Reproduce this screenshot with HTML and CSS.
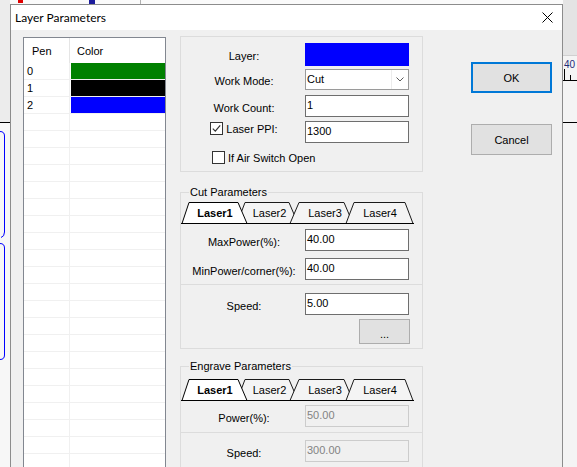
FILE: index.html
```html
<!DOCTYPE html>
<html>
<head>
<meta charset="utf-8">
<title>Layer Parameters</title>
<link rel="stylesheet" href="styles.css">
</head>
<body>
<div class="screen">
  <div class="app-left">
    <svg width="10" height="467" viewBox="0 0 10 467">
      <rect width="10" height="467" fill="#f7f7f7"/>
      <rect width="10" height="122" fill="#ececec"/>
      <line x1="0" y1="122.5" x2="10" y2="122.5" stroke="#000"/>
      <path d="M0,131.5 Q4.5,131.5 4.5,136 V232 Q4.5,236.5 1,237.5" fill="none" stroke="#0000ff"/>
      <path d="M0,243.5 Q4.5,243.5 4.5,248 V355 Q4.5,359.5 0,359.5" fill="none" stroke="#0000ff"/>
    </svg>
  </div>
  <div class="center-col">
    <div class="app-top">
      <svg width="553" height="4" viewBox="0 0 553 4">
        <rect x="8" y="0" width="5" height="3" fill="#e00000"/>
        <rect x="79" y="0" width="6" height="4" fill="#1c1c9c"/>
        <line x1="130.5" y1="0" x2="130.5" y2="4" stroke="#b0b0b0"/>
      </svg>
    </div>
    <div class="dialog">
      <div class="titlebar">
        <span class="title">Layer Parameters</span>
        <svg class="close" width="11" height="11" viewBox="0 0 11 11">
          <line x1="0.5" y1="0.5" x2="10.5" y2="10.5" stroke="#000" stroke-width="1"/>
          <line x1="10.5" y1="0.5" x2="0.5" y2="10.5" stroke="#000" stroke-width="1"/>
        </svg>
      </div>
      <div class="client">
        <div class="pen-list">
          <div class="pen-head">
            <div class="ph-pen">Pen</div>
            <div class="ph-color">Color</div>
          </div>
          <div class="pen-rows">
            <div class="pen-no">0</div><div class="pen-color"><div class="sw sw-green"></div></div>
            <div class="pen-no">1</div><div class="pen-color"><div class="sw sw-black"></div></div>
            <div class="pen-no">2</div><div class="pen-color"><div class="sw sw-blue"></div></div>
            <div></div><div></div>
            <div></div><div></div>
            <div></div><div></div>
            <div></div><div></div>
            <div></div><div></div>
            <div></div><div></div>
            <div></div><div></div>
            <div></div><div></div>
            <div></div><div></div>
            <div></div><div></div>
            <div></div><div></div>
            <div></div><div></div>
            <div></div><div></div>
            <div></div><div></div>
            <div></div><div></div>
            <div></div><div></div>
            <div></div><div></div>
            <div></div><div></div>
            <div></div><div></div>
            <div></div><div></div>
            <div></div><div></div>
          </div>
        </div>

        <div class="params">
          <div class="box">
            <div class="row r-layer">
              <div class="lbl">Layer:</div>
              <div class="layer-swatch"></div>
            </div>
            <div class="row r-mode">
              <div class="lbl">Work Mode:</div>
              <div class="select">
                <span class="val">Cut</span>
                <span class="drop">
                  <svg width="8" height="5" viewBox="0 0 8 5"><polyline points="0.5,0.5 4,4 7.5,0.5" fill="none" stroke="#5a5a5a" stroke-width="1"/></svg>
                </span>
              </div>
            </div>
            <div class="row r-count">
              <div class="lbl">Work Count:</div>
              <div class="edit">1</div>
            </div>
            <div class="row r-ppi">
              <div class="lbl">
                <span class="chk">
                  <svg width="9" height="9" viewBox="0 0 9 9"><polyline points="0.8,4.6 3.3,7.2 8.2,1.4" fill="none" stroke="#333" stroke-width="1.2"/></svg>
                </span>Laser PPI:
              </div>
              <div class="edit">1300</div>
            </div>
            <div class="air"><span class="chk"></span>If Air Switch Open</div>
          </div>

          <fieldset class="group cut">
            <legend>Cut Parameters</legend>
            <svg class="tabs" width="241" height="22" viewBox="0 0 241 22">
              <polygon class="tab" points="56,21.5 64,0.5 108,0.5 117,21.5"/>
              <polygon class="tab" points="109,21.5 118,0.5 163,0.5 172,21.5"/>
              <polygon class="tab" points="165,21.5 173,0.5 224,0.5 232,21.5"/>
              <polygon class="tab tab-on" points="1,21.5 8,0.5 57,0.5 66,21.5"/>
              <line class="tab-base" x1="0" y1="21.5" x2="233" y2="21.5"/>
              <text class="tab-t tab-t-on" x="34" y="15">Laser1</text>
              <text class="tab-t" x="88.5" y="15">Laser2</text>
              <text class="tab-t" x="144" y="15">Laser3</text>
              <text class="tab-t" x="199" y="15">Laser4</text>
            </svg>
            <div class="sect cut-s1">
              <div class="row">
                <div class="lbl">MaxPower(%):</div>
                <div class="edit">40.00</div>
              </div>
              <div class="row r-min">
                <div class="lbl">MinPower/corner(%):</div>
                <div class="edit">40.00</div>
              </div>
            </div>
            <div class="sect sect-sep cut-s2">
              <div class="row">
                <div class="lbl">Speed:</div>
                <div class="edit">5.00</div>
              </div>
              <div class="more-row">
                <button class="more">...</button>
              </div>
            </div>
          </fieldset>

          <fieldset class="group engrave">
            <legend>Engrave Parameters</legend>
            <svg class="tabs" width="241" height="22" viewBox="0 0 241 22">
              <polygon class="tab" points="56,21.5 64,0.5 108,0.5 117,21.5"/>
              <polygon class="tab" points="109,21.5 118,0.5 163,0.5 172,21.5"/>
              <polygon class="tab" points="165,21.5 173,0.5 224,0.5 232,21.5"/>
              <polygon class="tab tab-on" points="1,21.5 8,0.5 57,0.5 66,21.5"/>
              <line class="tab-base" x1="0" y1="21.5" x2="233" y2="21.5"/>
              <text class="tab-t tab-t-on" x="34" y="15">Laser1</text>
              <text class="tab-t" x="88.5" y="15">Laser2</text>
              <text class="tab-t" x="144" y="15">Laser3</text>
              <text class="tab-t" x="199" y="15">Laser4</text>
            </svg>
            <div class="sect eng-s1">
              <div class="row">
                <div class="lbl">Power(%):</div>
                <div class="edit dis">50.00</div>
              </div>
            </div>
            <div class="sect sect-sep eng-s2">
              <div class="row">
                <div class="lbl">Speed:</div>
                <div class="edit dis">300.00</div>
              </div>
            </div>
          </fieldset>
        </div>

        <div class="buttons">
          <button class="btn btn-default">OK</button>
          <button class="btn">Cancel</button>
        </div>
      </div>
    </div>
  </div>
  <div class="app-right">
    <svg width="14" height="467" viewBox="0 0 14 467">
      <rect width="14" height="467" fill="#f4f4f4"/>
      <rect width="14" height="55" fill="#e4e4e4"/>
      <line x1="0" y1="55.5" x2="14" y2="55.5" stroke="#d0d0d0"/>
      <text class="ruler-t" x="1" y="68">40</text>
      <line x1="1.5" y1="69" x2="1.5" y2="80" stroke="#000"/>
      <line x1="7.5" y1="75" x2="7.5" y2="80" stroke="#000"/>
      <line x1="0" y1="80.5" x2="14" y2="80.5" stroke="#000"/>
      <line x1="0" y1="122.5" x2="14" y2="122.5" stroke="#000"/>
    </svg>
  </div>
</div>
</body>
</html>
```

FILE: styles.css
```css
* { box-sizing: border-box; }
html, body { margin: 0; padding: 0; }
body {
  width: 577px;
  height: 467px;
  overflow: hidden;
  background: #f0f0f0;
  font-family: "Liberation Sans", Arial, sans-serif;
  font-size: 11px;
  color: #000;
}
svg { display: block; }

.screen { display: flex; height: 467px; }
.app-left { flex: none; width: 10px; }
.app-right { flex: none; width: 14px; }
.center-col { flex: none; width: 553px; display: flex; flex-direction: column; }
.app-top { flex: none; height: 4px; background: #fafafa; }

.dialog {
  flex: 1;
  min-height: 0;
  display: flex;
  flex-direction: column;
  border: 1px solid #8c8c8c;
  border-bottom: 0;
  background: #f0f0f0;
}
.titlebar {
  flex: none;
  height: 25px;
  background: #fff;
  display: flex;
  align-items: center;
  justify-content: space-between;
  padding: 0 9px 0 4px;
}
.title {
  font-family: "Lato", "Liberation Sans", sans-serif;
  font-size: 12px;
}

.client {
  flex: 1;
  min-height: 0;
  display: flex;
  align-items: flex-start;
  padding-left: 12px;
}

/* pen list */
.pen-list {
  flex: none;
  width: 143px;
  align-self: stretch;
  margin-top: 7px;
  border: 1px solid #828790;
  border-bottom: 0;
  background: #fff;
  overflow: hidden;
}
.pen-head {
  display: grid;
  grid-template-columns: 45px 95px;
  column-gap: 1px;
  height: 25px;
  background: #e5e5e5;
}
.pen-head div { background: #fff; line-height: 24px; padding-top: 1px; }
.ph-pen { padding-left: 8px; }
.ph-color { padding-left: 7px; }
.pen-rows {
  display: grid;
  grid-template-columns: 45px 95px;
  grid-auto-rows: 16px;
  gap: 1px;
  background: #f0f0f0;
}
.pen-rows > div { background: #fff; }
.pen-no { padding-left: 3px; line-height: 16px; }
.pen-color { padding-left: 1px; }
.sw { height: 16px; }
.sw-green { background: #008000; }
.sw-black { background: #000; }
.sw-blue { background: #0000ff; }

/* parameters column */
.params {
  flex: none;
  width: 243px;
  margin-left: 14px;
  margin-top: 6px;
  display: flex;
  flex-direction: column;
}
.box {
  height: 136px;
  border: 1px solid #dcdcdc;
  padding: 0 2px;
}
.row { display: flex; align-items: center; }
.lbl {
  flex: none;
  width: 122px;
  display: flex;
  justify-content: center;
  align-items: center;
  padding-top: 3px;
  white-space: nowrap;
}
.edit {
  flex: none;
  width: 104px;
  height: 22px;
  border: 1px solid #6e6e6e;
  background: #fff;
  padding: 0 1px;
  line-height: 18px;
  white-space: nowrap;
}
.edit.dis { background: #f0f0f0; border-color: #cccccc; color: #838383; }
.layer-swatch { flex: none; width: 104px; height: 23px; background: #0000ff; }
.select {
  flex: none;
  width: 104px;
  height: 21px;
  border: 1px solid #9a9a9a;
  background: #fff;
  display: flex;
}
.select .val { flex: 1; padding-left: 1px; line-height: 18px; }
.select .drop {
  flex: none;
  width: 17px;
  border-left: 1px solid #ececec;
  display: flex;
  align-items: center;
  justify-content: center;
}
.r-layer { margin-top: 6px; }
.r-mode { margin-top: 3px; }
.r-count { margin-top: 5px; }
.r-ppi { margin-top: 4px; align-items: flex-start; }
.r-ppi .lbl { padding-top: 1px; }
.chk {
  flex: none;
  width: 13px;
  height: 13px;
  border: 1px solid #333;
  background: #fff;
  margin-right: 3px;
  display: flex;
  align-items: center;
  justify-content: center;
}
.air {
  display: flex;
  align-items: center;
  height: 13px;
  margin-top: 8px;
  padding-left: 29px;
}

/* group boxes */
.group {
  margin: 14px 0 0;
  padding: 0;
  border: 1px solid #dcdcdc;
  min-width: 0;
}
.group legend {
  padding: 0 1px;
  margin-left: 8px;
  line-height: 13px;
  font-size: 11px;
}
.tabs { margin-top: 3px; }
.engrave { margin-top: 11px; }
.engrave .tabs { margin-top: 6px; }

.tab { fill: #f4f4f4; stroke: #1a1a1a; stroke-width: 1; }
.tab-on { fill: #fff; stroke: #000; }
.tab-base { stroke: #000; stroke-width: 1; }
.tab-t {
  font-family: "Liberation Sans", Arial, sans-serif;
  font-size: 11px;
  fill: #000;
  text-anchor: middle;
}
.tab-t-on { font-weight: bold; }

.sect { padding: 0 2px; }
.sect-sep { border-top: 1px solid #dcdcdc; }
.cut-s1 { padding-top: 5px; padding-bottom: 4px; }
.r-min { margin-top: 7px; }
.cut-s2 { padding-top: 8px; padding-bottom: 4px; }
.more-row { display: flex; justify-content: flex-end; padding-right: 10px; margin-top: 4px; }
.more {
  width: 51px;
  height: 25px;
  border: 1px solid #adadad;
  background: #e1e1e1;
  font-family: "Liberation Sans", Arial, sans-serif;
  font-size: 11px;
  color: #000;
  padding: 4px 0 0;
}
.eng-s1 { padding-top: 4px; padding-bottom: 5px; }
.eng-s2 { padding-top: 7px; padding-bottom: 6px; }

/* buttons */
.buttons {
  flex: none;
  width: 81px;
  margin-left: 48px;
  margin-top: 32px;
  display: flex;
  flex-direction: column;
}
.btn {
  height: 31px;
  border: 1px solid #adadad;
  background: #e1e1e1;
  font-family: "Liberation Sans", Arial, sans-serif;
  font-size: 11px;
  color: #000;
  padding: 0;
}
.btn-default { border: 2px solid #0078d7; }
.btn + .btn { margin-top: 31px; }

.ruler-t {
  font-family: "Liberation Sans", Arial, sans-serif;
  font-size: 10px;
  fill: #1e2a78;
}
```
